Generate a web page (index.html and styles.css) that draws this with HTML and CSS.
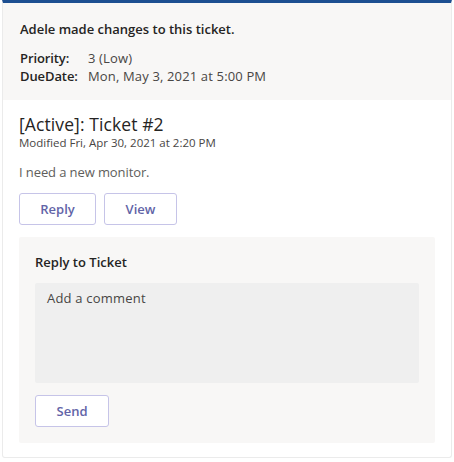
FILE: index.html
```html
<!DOCTYPE html>
<html>
<head>
<meta charset="utf-8">
<link rel="stylesheet" href="styles.css">
</head>
<body>
<div class="card">
  <div class="header">
    <div class="summary">Adele made changes to this ticket.</div>
    <div class="facts">
      <div class="fact-label">Priority:</div><div class="fact-value">3 (Low)</div>
      <div class="fact-label">DueDate:</div><div class="fact-value">Mon, May 3, 2021 at 5:00 PM</div>
    </div>
  </div>
  <div class="body">
    <div class="title">[Active]: Ticket #2</div>
    <div class="modified">Modified Fri, Apr 30, 2021 at 2:20 PM</div>
    <div class="desc">I need a new monitor.</div>
    <div class="actions">
      <button class="btn btn-reply">Reply</button>
      <button class="btn btn-view">View</button>
    </div>
    <div class="reply-panel">
      <div class="reply-title">Reply to Ticket</div>
      <div class="comment">Add a comment</div>
      <button class="btn btn-send">Send</button>
    </div>
  </div>
</div>
</body>
</html>
```
FILE: styles.css
```css
html, body { margin: 0; padding: 0; background: #ffffff; }
body {
  font-family: "Open Sans", "Noto Sans", sans-serif;
  color: #252423;
  padding: 0 2px 3px 2px;
}
.card {
  border: 1px solid #ebebeb;
  border-top: 3px solid #1d4f91;
  border-radius: 0 0 3px 3px;
  height: 458px;
  box-sizing: border-box;
  display: flex;
  flex-direction: column;
}
.header {
  background: #f8f7f6;
  padding: 16px 17px 0 17px;
  height: 97px;
  box-sizing: border-box;
}
.summary {
  font-size: 13px;
  font-weight: 600;
  line-height: 20px;
  letter-spacing: 0;
}
.facts {
  display: grid;
  grid-template-columns: 68px auto;
  margin-top: 10px;
  font-size: 13px;
  line-height: 18px;
}
.fact-label { font-weight: 600; letter-spacing: -0.1px; }
.fact-value { color: #484644; letter-spacing: 0.15px; }
.body { padding: 13px 16px 0 16px; }
.title {
  font-size: 17.5px;
  line-height: 22px;
  letter-spacing: 0.1px;
}
.modified {
  font-size: 11.5px;
  line-height: 16px;
  color: #484644;
  letter-spacing: 0;
}
.desc {
  font-size: 13px;
  line-height: 18px;
  color: #605e5c;
  margin-top: 12px;
  letter-spacing: -0.1px;
}
.actions {
  display: flex;
  gap: 8px;
  margin-top: 12px;
}
.btn {
  font-family: inherit;
  background: #ffffff;
  border: 1px solid #c6c4e8;
  border-radius: 3px;
  color: #6264a7;
  font-size: 13px;
  font-weight: 600;
  height: 32px;
  padding: 0;
  box-sizing: border-box;
}
.btn-reply { width: 77px; }
.btn-view { width: 73px; }
.reply-panel {
  margin-top: 12px;
  background: #f8f7f6;
  padding: 15px 16px 15px 16px;
  height: 206px;
  box-sizing: border-box;
  border-radius: 2px;
}
.reply-title {
  font-size: 13px;
  font-weight: 600;
  line-height: 20px;
  letter-spacing: 0;
}
.comment {
  margin-top: 11px;
  background: #efefef;
  height: 100px;
  box-sizing: border-box;
  padding: 6px 12px;
  font-size: 13px;
  line-height: 18px;
  color: #484644;
  border-radius: 2px;
  letter-spacing: 0.2px;
}
.btn-send {
  margin-top: 12px;
  width: 74px;
}
```
